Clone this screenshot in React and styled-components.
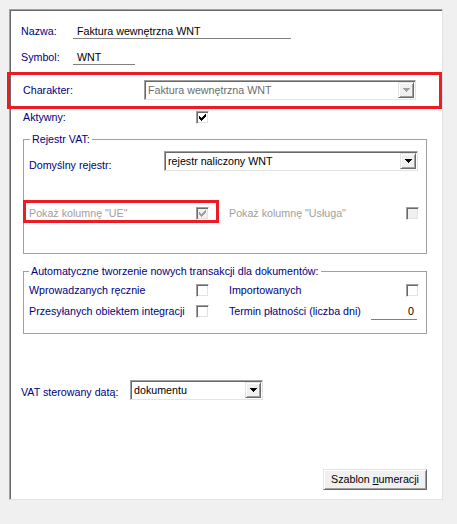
import React from "react";
import styled, { createGlobalStyle, css } from "styled-components";

const GlobalStyle = createGlobalStyle`
  html, body { margin: 0; padding: 0; background: #f0f0f0; }
  body {
    font-family: "Liberation Sans", Arial, sans-serif;
    font-size: 10.7px;
    color: #000;
  }
`;

const Page = styled.div`
  padding: 9px 0 0 9px;
`;

const Panel = styled.div`
  box-sizing: border-box;
  width: 434px;
  height: 491px;
  background: #fff;
  border: 1px solid;
  border-color: #a0a0a0 #e3e3e3 #e3e3e3 #a0a0a0;
  box-shadow: inset 1px 1px 0 #696969;
  padding-left: 11px;
  display: flex;
  flex-direction: column;
`;

const highlight = css`
  position: relative;
  &::after {
    content: "";
    position: absolute;
    top: ${(p) => p.$box[0]}px;
    right: ${(p) => p.$box[1]}px;
    bottom: ${(p) => p.$box[2]}px;
    left: ${(p) => p.$box[3]}px;
    border: 3px solid #ed1c24;
    pointer-events: none;
  }
`;

const Row = styled.div`
  display: flex;
  align-items: ${(p) => p.$align || "flex-end"};
  margin-top: ${(p) => p.$mt || 0}px;
  margin-left: ${(p) => p.$ml || 0}px;
  ${(p) => p.$box && highlight}
`;

const Label = styled.span`
  flex: none;
  width: ${(p) => p.$w}px;
  line-height: ${(p) => p.$lh || 12}px;
  margin-bottom: ${(p) => p.$mb || 0}px;
  color: ${(p) => (p.$disabled ? "#a0a0a0" : "#000080")};
  white-space: nowrap;
`;

const LineField = styled.span`
  box-sizing: border-box;
  width: ${(p) => p.$w}px;
  line-height: 12px;
  padding: 0 0 1px 4px;
  border-bottom: 1px solid #808080;
  white-space: nowrap;
`;

const NumberField = styled.span`
  box-sizing: border-box;
  flex: none;
  width: 46px;
  margin-right: 2px;
  line-height: 13px;
  padding: 0 3px 1px 0;
  text-align: right;
  border-bottom: 1px solid #808080;
`;

const Combo = styled.div`
  box-sizing: border-box;
  flex: none;
  width: ${(p) => p.$w}px;
  height: 20px;
  padding: 1px;
  display: flex;
  align-items: center;
  background: #fff;
  border: 1px solid;
  border-color: #a0a0a0 #e3e3e3 #e3e3e3 #a0a0a0;
  box-shadow: inset 1px 1px 0 #696969;
`;

const ComboText = styled.span`
  flex: 1;
  padding-left: 2px;
  line-height: 12px;
  white-space: nowrap;
  color: ${(p) => (p.$disabled ? "#6d6d6d" : "#000")};
`;

const DropButton = styled.span`
  box-sizing: border-box;
  flex: none;
  width: 16px;
  height: 16px;
  background: #f0f0f0;
  border: 1px solid;
  border-color: #e3e3e3 #696969 #696969 #e3e3e3;
  box-shadow: inset 1px 1px 0 #fff, inset -1px -1px 0 #a0a0a0;
  display: flex;
  align-items: center;
  justify-content: center;
`;

const Box = styled.span`
  box-sizing: border-box;
  flex: none;
  width: 13px;
  height: 13px;
  border: 1px solid;
  border-color: #a0a0a0 #fff #fff #a0a0a0;
  box-shadow: inset 1px 1px 0 #696969, inset -1px -1px 0 #e3e3e3;
  background: ${(p) => (p.$disabled ? "#f0f0f0" : "#fff")};
  display: flex;
  align-items: center;
  justify-content: center;
`;

const Group = styled.fieldset`
  box-sizing: border-box;
  width: 404px;
  min-inline-size: 0;
  margin: ${(p) => p.$mt}px 0 0 2px;
  padding: ${(p) => p.$pt}px 0 ${(p) => p.$pb}px 5px;
  border: 1px solid #a0a0a0;
`;

const Legend = styled.legend`
  margin-left: ${(p) => p.$ml || 0}px;
  padding: 0 2px;
  line-height: 12px;
  color: #000080;
  white-space: nowrap;
`;

const OptionRow = styled.div`
  display: flex;
  align-items: flex-start;
  gap: 20px;
  margin-top: ${(p) => p.$mt || 0}px;
`;

const Option = styled.div`
  display: flex;
  align-items: flex-start;
  width: ${(p) => p.$w}px;
  ${(p) => p.$box && highlight}
`;

const PushButton = styled.button`
  box-sizing: border-box;
  align-self: flex-end;
  margin: auto 15px 9px 0;
  width: 104px;
  height: 21px;
  padding: 0 0 1px;
  font: inherit;
  line-height: 12px;
  color: #000;
  background: #f0f0f0;
  border: 1px solid;
  border-color: #e3e3e3 #696969 #696969 #e3e3e3;
  box-shadow: inset 1px 1px 0 #fff, inset -1px -1px 0 #a0a0a0;
  u { text-decoration: underline; }
`;

const CHECK = [
  "......#",
  ".....##",
  "#...###",
  "##.###.",
  "#####..",
  ".###...",
  "..#....",
];

function CheckMark({ color }) {
  return (
    <svg width="7" height="7" viewBox="0 0 7 7" shapeRendering="crispEdges">
      {CHECK.flatMap((line, y) =>
        line.split("").map((c, x) =>
          c === "#" ? <rect key={`${x}-${y}`} x={x} y={y} width="1" height="1" fill={color} /> : null
        )
      )}
    </svg>
  );
}

function Checkbox({ checked, disabled }) {
  return (
    <Box $disabled={disabled}>
      {checked && <CheckMark color={disabled ? "#a0a0a0" : "#000"} />}
    </Box>
  );
}

function Arrow({ color }) {
  return (
    <svg width="7" height="4" viewBox="0 0 7 4" shapeRendering="crispEdges">
      <path d="M0 0h7v1H0zM1 1h5v1H1zM2 2h3v1H2zM3 3h1v1H3z" fill={color} />
    </svg>
  );
}

function Select({ width, value, disabled }) {
  return (
    <Combo $w={width}>
      <ComboText $disabled={disabled}>{value}</ComboText>
      <DropButton>
        <Arrow color={disabled ? "#a0a0a0" : "#000"} />
      </DropButton>
    </Combo>
  );
}

export default function App() {
  return (
    <>
      <GlobalStyle />
      <Page>
        <Panel>
          <Row $align="baseline" $mt={15}>
            <Label $w={52}>Nazwa:</Label>
            <LineField $w={218}>Faktura wewnętrzna WNT</LineField>
          </Row>
          <Row $align="baseline" $mt={12}>
            <Label $w={52}>Symbol:</Label>
            <LineField $w={62}>WNT</LineField>
          </Row>

          <Row $align="center" $mt={15} $box={[-8, 0, -9, -14]}>
            <Label $w={121} style={{ marginLeft: 2 }}>Charakter:</Label>
            <Select width={272} value="Faktura wewnętrzna WNT" disabled />
          </Row>

          <Row $align="flex-start" $mt={11} $ml={2}>
            <Label $w={173}>Aktywny:</Label>
            <Checkbox checked />
          </Row>

          <Group $mt={9} $pt={6} $pb={33}>
            <Legend $ml={1}>Rejestr VAT:</Legend>
            <Row>
              <Label $w={135}>Domyślny rejestr:</Label>
              <Select width={254} value="rejestr naliczony WNT" />
            </Row>
            <OptionRow $mt={36}>
              <Option $w={180} $box={[-7, -10, -3, -6]}>
                <Label $w={167} $lh={13} $disabled>Pokaż kolumnę "UE"</Label>
                <Checkbox checked disabled />
              </Option>
              <Option $w={190}>
                <Label $w={177} $lh={13} $disabled>Pokaż kolumnę "Usługa"</Label>
                <Checkbox disabled />
              </Option>
            </OptionRow>
          </Group>

          <Group $mt={11} $pt={7} $pb={13}>
            <Legend>Automatyczne tworzenie nowych transakcji dla dokumentów:</Legend>
            <OptionRow>
              <Option $w={180}>
                <Label $w={167} $lh={13}>Wprowadzanych ręcznie</Label>
                <Checkbox />
              </Option>
              <Option $w={190}>
                <Label $w={177} $lh={13}>Importowanych</Label>
                <Checkbox />
              </Option>
            </OptionRow>
            <OptionRow $mt={8}>
              <Option $w={180}>
                <Label $w={167} $lh={13}>Przesyłanych obiektem integracji</Label>
                <Checkbox />
              </Option>
              <Option $w={190}>
                <Label $w={142} $lh={13}>Termin płatności (liczba dni)</Label>
                <NumberField>0</NumberField>
              </Option>
            </OptionRow>
          </Group>

          <Row $mt={46}>
            <Label $w={109} $mb={2}>VAT sterowany datą:</Label>
            <Select width={133} value="dokumentu" />
          </Row>

          <PushButton type="button">
            Szablon <u>n</u>umeracji
          </PushButton>
        </Panel>
      </Page>
    </>
  );
}
